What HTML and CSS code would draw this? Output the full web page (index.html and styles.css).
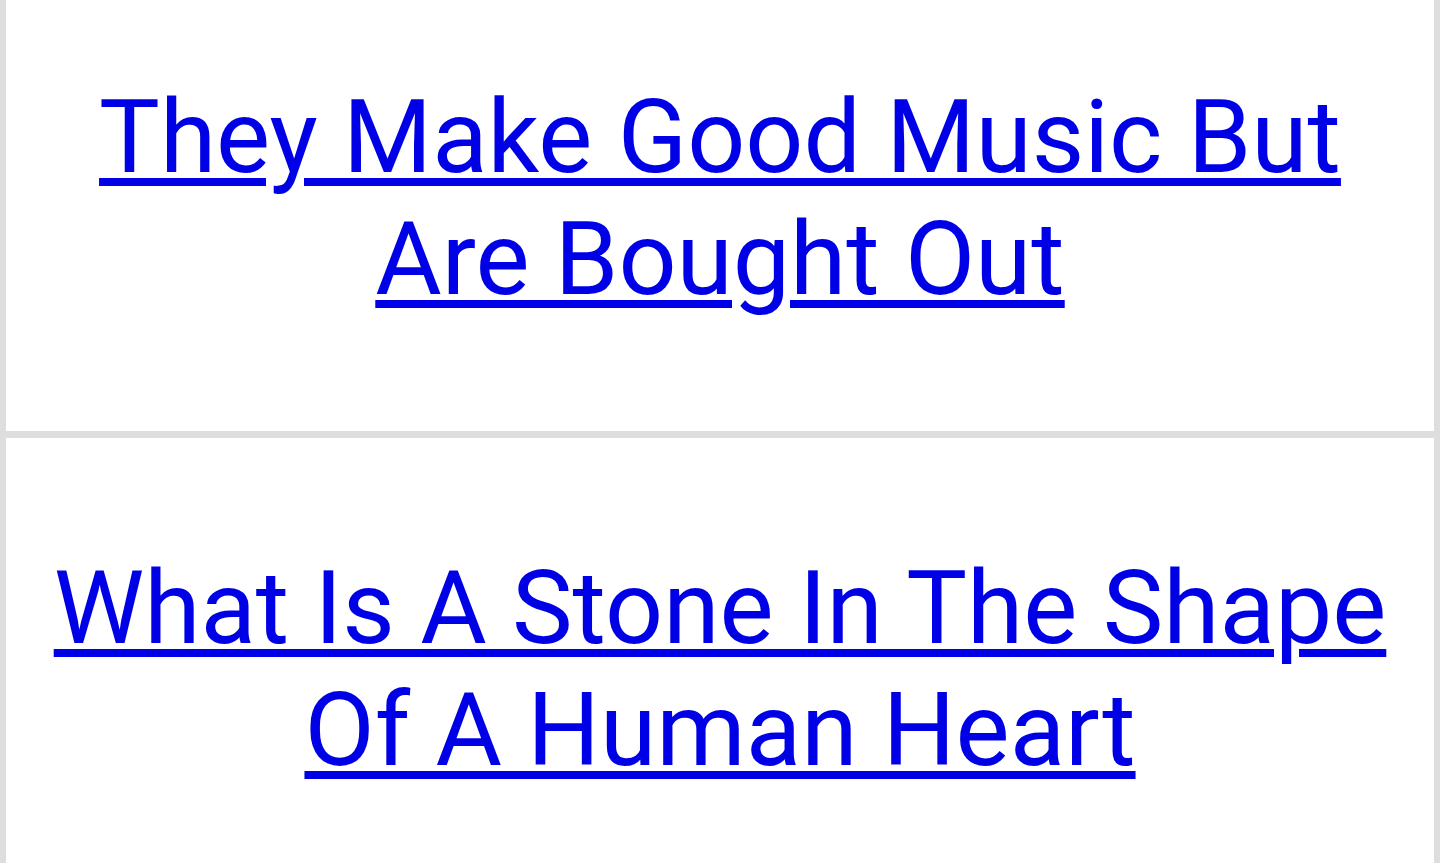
FILE: index.html
```html
<!DOCTYPE html>
<html lang="en">
<head>
<meta charset="utf-8">
<title>Posts</title>
<link rel="stylesheet" href="styles.css">
</head>
<body>
<main class="list">
  <article class="card card-first">
    <h2 class="card-title"><a href="#">They Make Good Music But Are Bought Out</a></h2>
  </article>
  <article class="card">
    <h2 class="card-title"><a href="#">What Is A Stone In The Shape Of A Human Heart</a></h2>
  </article>
</main>
</body>
</html>
```

FILE: styles.css
```css
html, body {
  margin: 0;
  padding: 0;
  background: #ffffff;
  overflow: hidden;
}

body {
  font-family: Roboto, "Noto Sans", sans-serif;
  height: 863px;
}

.list {
  border-left: 6px solid #dedede;
  border-right: 6px solid #dedede;
  min-height: 100vh;
  display: flex;
  flex-direction: column;
}

.card {
  padding: 109px 30px 111px;
  border-bottom: 7px solid #dedede;
}

.card-first {
  margin-top: -33px;
}

.card-title {
  margin: 0;
  font-size: 102px;
  line-height: 122px;
  font-weight: 400;
  text-align: center;
}

.card-title a {
  color: #0000e6;
  text-decoration: underline;
  text-decoration-thickness: 8px;
  text-underline-offset: 6px;
  text-decoration-skip-ink: auto;
}
```
